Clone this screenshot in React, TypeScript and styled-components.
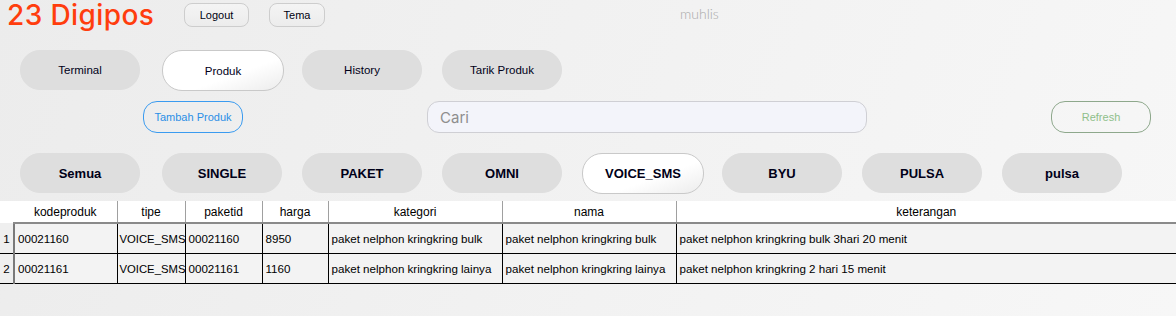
import React, { useState } from 'react';
import styled, { createGlobalStyle } from 'styled-components';

const GlobalStyle = createGlobalStyle`
    html, body {
        margin : 0;
        padding : 0;
    }
    body {
        font-family : "Liberation Sans", Arial, sans-serif;
    }
`;

const Page = styled.div`
    width : 1176px;
    height : 316px;
    box-sizing: border-box;
    overflow : hidden;
    background : linear-gradient(110deg, #ececec 0%, #f1f1f1 45%, #f7f7f7 100%);
    display : flex;
    flex-direction : column;
`;

const Header = styled.div`
    display : flex;
    align-items : flex-start;
    height : 34px;
    & > .title-box{
        width : 184px;
        padding-left : 7px;
        box-sizing : border-box;
    }
`;

const Title = styled.div`
    font-family : "Inter", "Lato", sans-serif;
    font-size : 28px;
    line-height : 30px;
    font-weight : 500;
    color : #ff3d0d;
    letter-spacing : 0.4px;
    white-space : nowrap;
`;

const SmallButton = styled.button<{ $width: number }>`
    width : ${({ $width }) => `${$width}px`};
    height : 24px;
    margin-top : 3px;
    margin-right : 20px;
    border : 1px solid #cdcdcd;
    border-radius : 8px;
    background : linear-gradient(180deg, #f4f4f4, #ececec);
    font-family : "Liberation Sans", Arial, sans-serif;
    font-size : 11px;
    color : #000010;
    padding : 0;
`;

const UserName = styled.div`
    margin-left : 335px;
    padding-top : 5px;
    font-family : "Lato", "Open Sans", sans-serif;
    font-weight : 300;
    font-size : 14px;
    color : #a9a9a9;
`;

const PillRow = styled.div<{ $top: number }>`
    display : flex;
    align-items : flex-start;
    gap : 20px;
    padding-left : 20px;
    margin-top : ${({ $top }) => `${$top}px`};
    & > :first-child{
        margin-right : 2px;
    }
`;

const Pill = styled.button<{ $active?: boolean; $bold?: boolean }>`
    width : ${({ $active }) => ($active ? '122px' : '120px')};
    height : ${({ $active }) => ($active ? '41px' : '40px')};
    margin-right : ${({ $active }) => ($active ? '-2px' : '0')};
    border-radius : 20px;
    padding : 0;
    border : 1px solid ${({ $active }) => ($active ? '#c9c9c9' : '#dedede')};
    background : ${({ $active }) => ($active ? 'linear-gradient(160deg, #ffffff 60%, #ececec 100%)' : '#dedede')};
    font-family : "Liberation Sans", Arial, sans-serif;
    font-size : ${({ $bold }) => ($bold ? '13px' : '11.5px')};
    font-weight : ${({ $bold }) => ($bold ? 700 : 400)};
    color : #000018;
    cursor : pointer;
`;

const ToolRow = styled.div`
    display : flex;
    align-items : center;
    gap : 184px;
    padding-left : 143px;
    margin-top : 10px;
    height : 32px;
`;

const OutlineButton = styled.button<{ $color: string; $border: string }>`
    width : 100px;
    height : 32px;
    border-radius : 14px;
    border : 1px solid ${({ $border }) => $border};
    background : transparent;
    color : ${({ $color }) => $color};
    font-family : "Liberation Sans", Arial, sans-serif;
    font-size : 11px;
    padding : 0;
`;

const SearchBox = styled.input`
    width : 440px;
    height : 32px;
    box-sizing : border-box;
    border : 1px solid #cfcfd4;
    border-radius : 12px;
    background : #f3f4fa;
    padding : 0 12px;
    font-family : "Inter", "Lato", sans-serif;
    font-size : 15px;
    color : #333;
    outline : none;
    &::placeholder{
        color : #8e8e8e;
    }
`;

const TableWrap = styled.div`
    margin-top : 7px;
    width : 1176px;
`;

const Grid = styled.table`
    border-collapse : collapse;
    table-layout : fixed;
    width : 1176px;
    font-family : "Liberation Sans", Arial, sans-serif;
    font-size : 12px;
    color : #000;
    & th{
        background : #ffffff;
        font-weight : 400;
        height : 21px;
        padding : 0;
        text-align : center;
        border-right : 1px solid #a0a0a0;
        border-bottom : 2px solid #8a8a8a;
    }
    & th.corner{
        border-bottom : none;
        border-right : none;
    }
    & th:last-child{
        border-right : none;
    }
    & td{
        background : #f3f3f3;
        height : 29px;
        padding : 0 0 0 3px;
        font-size : 11.6px;
        white-space : nowrap;
        overflow : hidden;
        border-right : 1px solid #000;
        border-bottom : 1px solid #000;
    }
    & td.tight{
        padding-left : 2px;
        font-size : 11.3px;
    }
    & td:last-child{
        border-right : none;
    }
    & td.rownum{
        background : #efefef;
        padding : 0;
        text-align : center;
        border-right : 2px solid #7a7a7a;
        border-bottom : 1px solid #000;
    }
`;

const columns = [
    { key: 'kodeproduk', width: 103 },
    { key: 'tipe', width: 68 },
    { key: 'paketid', width: 77 },
    { key: 'harga', width: 66 },
    { key: 'kategori', width: 174 },
    { key: 'nama', width: 174 },
    { key: 'keterangan', width: 500 },
];

const rows = [
    ['00021160', 'VOICE_SMS', '00021160', '8950', 'paket nelphon kringkring bulk', 'paket nelphon kringkring bulk', 'paket nelphon kringkring bulk 3hari 20 menit'],
    ['00021161', 'VOICE_SMS', '00021161', '1160', 'paket nelphon kringkring lainya', 'paket nelphon kringkring lainya', 'paket nelphon kringkring 2 hari 15 menit'],
];

const menus = ['Terminal', 'Produk', 'History', 'Tarik Produk'];
const categories = ['Semua', 'SINGLE', 'PAKET', 'OMNI', 'VOICE_SMS', 'BYU', 'PULSA', 'pulsa'];

function App() {
    const [menu, setMenu] = useState('Produk');
    const [category, setCategory] = useState('VOICE_SMS');
    const [query, setQuery] = useState('');
    return (
        <Page>
            <GlobalStyle />
            <Header>
                <div className='title-box'>
                    <Title>23 Digipos</Title>
                </div>
                <SmallButton $width={65}>Logout</SmallButton>
                <SmallButton $width={56}>Tema</SmallButton>
                <UserName>muhlis</UserName>
            </Header>
            <PillRow $top={16}>
                {menus.map(m => (
                    <Pill key={m} $active={menu === m} onClick={() => setMenu(m)}>{m}</Pill>
                ))}
            </PillRow>
            <ToolRow>
                <OutlineButton $color='#2b8ee6' $border='#3a9bf0'>Tambah Produk</OutlineButton>
                <SearchBox placeholder='Cari' value={query} onChange={e => setQuery(e.target.value)} />
                <OutlineButton $color='#8fbf8a' $border='#8ea88c'>Refresh</OutlineButton>
            </ToolRow>
            <PillRow $top={20}>
                {categories.map(c => (
                    <Pill key={c} $bold $active={category === c} onClick={() => setCategory(c)}>{c}</Pill>
                ))}
            </PillRow>
            <TableWrap>
                <Grid>
                    <colgroup>
                        <col style={{ width: 14 }} />
                        {columns.map(c => <col key={c.key} style={{ width: c.width }} />)}
                    </colgroup>
                    <thead>
                        <tr>
                            <th className='corner'></th>
                            {columns.map(c => <th key={c.key}>{c.key}</th>)}
                        </tr>
                    </thead>
                    <tbody>
                        {rows.map((r, i) => (
                            <tr key={i}>
                                <td className='rownum'>{i + 1}</td>
                                {r.map((v, j) => <td key={j} className={j === 1 ? 'tight' : undefined}>{v}</td>)}
                            </tr>
                        ))}
                    </tbody>
                </Grid>
            </TableWrap>
        </Page>
    );
}

export default App;
